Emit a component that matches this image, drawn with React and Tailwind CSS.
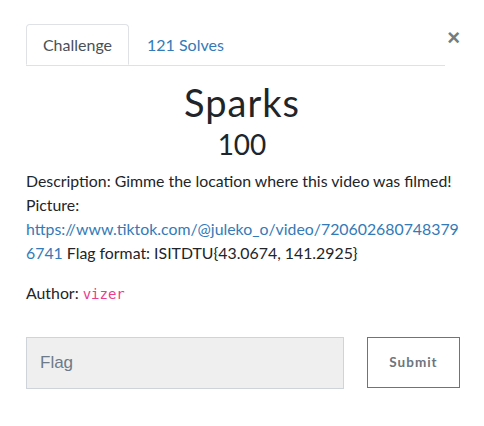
import { useState } from 'react';

const DESCRIPTION_LINK = 'https://www.tiktok.com/@juleko_o/video/7206026807483796741';

export default function App() {
  const [tab, setTab] = useState('challenge');
  const [flag, setFlag] = useState('');

  return (
    <div className="min-h-screen w-[484px] bg-white font-['Lato','Liberation_Sans',sans-serif] text-[#212529]">
      <div className="relative pl-[26px] pr-[20px] pt-[24px]">
        <button className="absolute right-[24px] top-[27px] text-[22px] font-bold leading-none text-[#7a7a7a] font-['Liberation_Sans',sans-serif]">
          ×
        </button>

        <nav className="mr-[19px] flex border-b border-[#dee2e6]">
          <button
            onClick={() => setTab('challenge')}
            className="-mb-px h-[41px] w-[103px] rounded-t-[4px] border border-[#dee2e6] border-b-white bg-white text-[16px] text-[#495057]"
          >
            Challenge
          </button>
          <button
            onClick={() => setTab('solves')}
            className="h-[41px] px-[18px] text-[16px] text-[#337ab7]"
          >
            121 Solves
          </button>
        </nav>

        <div className="pr-[6px] pt-[13px] text-center">
          <h2 className="text-[38px] leading-[46px] tracking-[1px] text-[#212529]">Sparks</h2>
          <h3 className="mt-[2px] text-[28px] leading-[34px]">100</h3>
        </div>

        <div className="mt-[8px] text-[15.85px] leading-[24px]">
          <p className="break-words">
            Description: Gimme the location where this video was filmed! Picture:{' '}
            <a href={DESCRIPTION_LINK} className="text-[#337ab7]">
              {DESCRIPTION_LINK}
            </a>{' '}
            Flag format: ISITDTU{'{'}43.0674, 141.2925{'}'}
          </p>
          <p className="mt-[16px]">
            Author:{' '}
            <code className="font-['DejaVu_Sans_Mono',monospace] text-[14px] text-[#e83e8c]">vizer</code>
          </p>
        </div>

        <form
          onSubmit={(e) => e.preventDefault()}
          className="mt-[31px] flex items-start justify-between pr-[6px]"
        >
          <input
            value={flag}
            onChange={(e) => setFlag(e.target.value)}
            placeholder="Flag"
            className="h-[52px] w-[318px] border border-[#ced4da] bg-[#efefef] px-[13px] font-['Liberation_Sans',sans-serif] text-[17px] text-[#495057] outline-none placeholder:text-[#6c7a89]"
          />
          <button
            type="submit"
            className="-mr-[2px] h-[51px] w-[93px] border border-[#6c757d] bg-white text-[13.5px] font-bold tracking-[1px] text-[#6c757d]"
          >
            Submit
          </button>
        </form>
      </div>
    </div>
  );
}
